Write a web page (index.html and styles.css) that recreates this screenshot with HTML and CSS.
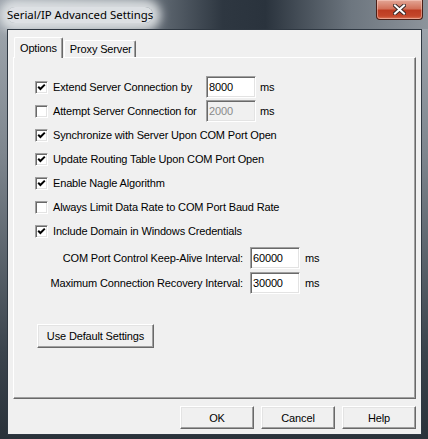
FILE: index.html
```html
<!DOCTYPE html>
<html lang="en">
<head>
    <meta charset="UTF-8">
    <meta name="viewport" content="width=device-width, initial-scale=1.0">
    <title>Serial/IP Advanced Settings</title>
    <link rel="stylesheet" href="styles.css">
</head>
<body>
    <div class="window">
        <div class="titlebar">
            <span class="title">Serial/IP Advanced Settings</span>
            <button class="close-btn" title="Close">
                <svg width="13" height="11" viewBox="0 0 13 11">
                    <path d="M2 1.5 L11 9.5 M11 1.5 L2 9.5" stroke="#3b2a28" stroke-width="4" stroke-linecap="square"/>
                    <path d="M2 1.5 L11 9.5 M11 1.5 L2 9.5" stroke="#ffffff" stroke-width="2" stroke-linecap="square"/>
                </svg>
            </button>
        </div>

        <div class="client">
            <div class="tabs">
                <div class="tab active">Options</div>
                <div class="tab">Proxy Server</div>
            </div>

            <div class="tab-panel">
                <div class="option">
                    <span class="box checked"><svg width="9" height="9" viewBox="0 0 9 9"><polyline points="1.2,3.8 3.4,6 7.8,1.6" fill="none" stroke="#000" stroke-width="2"/></svg></span>
                    <span class="option-label fixed">Extend Server Connection by</span>
                    <input class="field" type="text" value="8000">
                    <span class="unit">ms</span>
                </div>
                <div class="option">
                    <span class="box"></span>
                    <span class="option-label fixed">Attempt Server Connection for</span>
                    <input class="field" type="text" value="2000" disabled>
                    <span class="unit">ms</span>
                </div>
                <div class="option">
                    <span class="box checked"><svg width="9" height="9" viewBox="0 0 9 9"><polyline points="1.2,3.8 3.4,6 7.8,1.6" fill="none" stroke="#000" stroke-width="2"/></svg></span>
                    <span class="option-label">Synchronize with Server Upon COM Port Open</span>
                </div>
                <div class="option">
                    <span class="box checked"><svg width="9" height="9" viewBox="0 0 9 9"><polyline points="1.2,3.8 3.4,6 7.8,1.6" fill="none" stroke="#000" stroke-width="2"/></svg></span>
                    <span class="option-label">Update Routing Table Upon COM Port Open</span>
                </div>
                <div class="option">
                    <span class="box checked"><svg width="9" height="9" viewBox="0 0 9 9"><polyline points="1.2,3.8 3.4,6 7.8,1.6" fill="none" stroke="#000" stroke-width="2"/></svg></span>
                    <span class="option-label">Enable Nagle Algorithm</span>
                </div>
                <div class="option">
                    <span class="box"></span>
                    <span class="option-label">Always Limit Data Rate to COM Port Baud Rate</span>
                </div>
                <div class="option">
                    <span class="box checked"><svg width="9" height="9" viewBox="0 0 9 9"><polyline points="1.2,3.8 3.4,6 7.8,1.6" fill="none" stroke="#000" stroke-width="2"/></svg></span>
                    <span class="option-label">Include Domain in Windows Credentials</span>
                </div>

                <div class="intervals">
                    <label class="interval-label">COM Port Control Keep-Alive Interval:</label>
                    <input class="field" type="text" value="60000">
                    <span class="unit">ms</span>

                    <label class="interval-label">Maximum Connection Recovery Interval:</label>
                    <input class="field" type="text" value="30000">
                    <span class="unit">ms</span>
                </div>

                <button class="btn defaults-btn">Use Default Settings</button>
            </div>

            <div class="actions">
                <button class="btn">OK</button>
                <button class="btn">Cancel</button>
                <button class="btn">Help</button>
            </div>
        </div>
    </div>
</body>
</html>
```

FILE: styles.css
```css
* {
    margin: 0;
    padding: 0;
    box-sizing: border-box;
}

body {
    font-family: 'Liberation Sans', Arial, sans-serif;
    font-size: 11px;
    letter-spacing: -0.15px;
    color: #000;
    background-color: #2a323a;
    white-space: nowrap;
}

/* Window frame */
.window {
    width: 428px;
    height: 439px;
    padding: 0 6px 4px 7px;
    background: linear-gradient(to bottom, #a3aab1 0%, #7e868e 35%, #3b444d 80%, #2a323a 100%);
    display: flex;
    flex-direction: column;
}

.titlebar {
    height: 29px;
    margin: 0 -6px 0 -7px;
    padding: 0 5px 0 7px;
    display: flex;
    justify-content: space-between;
    align-items: flex-start;
    background: linear-gradient(to right, #9aa2aa 0%, #78818a 30%, #2e3741 52%, #2a333d 62%, #6d767f 82%, #8d949b 100%);
}

.title {
    margin-top: 7px;
    font-family: 'Noto Sans', sans-serif;
    font-size: 11.4px;
    letter-spacing: 0;
    line-height: 16px;
    color: #000;
    background-color: rgba(226, 229, 232, 0.95);
    border-radius: 8px;
    box-shadow: 0 0 10px 8px rgba(226, 229, 232, 0.9);
}

.close-btn {
    width: 47px;
    height: 20px;
    border: 1px solid #4a1f17;
    border-top: none;
    border-radius: 0 0 4px 4px;
    background: linear-gradient(to bottom, #e3a696 0%, #d2725b 45%, #bd3c22 55%, #c4472b 85%, #dd7a5c 100%);
    box-shadow: inset 0 0 0 1px rgba(255, 220, 210, 0.45);
    display: flex;
    align-items: center;
    justify-content: center;
}

/* Dialog body */
.client {
    height: 406px;
    background-color: #f0f0f0;
    border: 1px solid #2f3842;
    padding: 7px 5px 0 5px;
    display: flex;
    flex-direction: column;
}

.tabs {
    display: flex;
    align-items: flex-end;
    height: 20px;
    padding-left: 1px;
    position: relative;
    z-index: 1;
}

.tab {
    height: 17px;
    padding: 0 3px 0 5px;
    line-height: 16px;
    background-color: #f0f0f0;
    border-top: 1px solid #fff;
    border-left: 1px solid #fff;
    border-right: 1px solid #696969;
    box-shadow: inset -1px 0 0 #a0a0a0;
    border-radius: 2px 2px 0 0;
}

.tab.active {
    height: 21px;
    margin-bottom: -1px;
    padding: 2px 5px 0 5px;
    margin-right: 1px;
}

.tab-panel {
    height: 342px;
    border: 1px solid;
    border-color: #fff #696969 #696969 #fff;
    box-shadow: inset -1px -1px 0 #a0a0a0;
    padding: 17px 0 0 21px;
}

.option {
    height: 24px;
    display: flex;
    align-items: center;
}

.box {
    width: 13px;
    height: 13px;
    flex-shrink: 0;
    background-color: #fff;
    border: 1px solid;
    border-color: #a0a0a0 #fff #fff #a0a0a0;
    box-shadow: inset 1px 1px 0 #696969, inset -1px -1px 0 #e3e3e3;
    padding: 1px 0 0 1px;
    margin-right: 5px;
}

.box svg {
    display: block;
}

.option-label.fixed {
    width: 153px;
}

.field {
    width: 50px;
    height: 22px;
    font-family: inherit;
    font-size: 11px;
    letter-spacing: -0.15px;
    color: #000;
    padding: 0 2px;
    background-color: #fff;
    border: 1px solid;
    border-color: #a0a0a0 #fff #fff #a0a0a0;
    box-shadow: inset 1px 1px 0 #696969, inset -1px -1px 0 #e3e3e3;
    outline: none;
}

.field:disabled {
    background-color: #f0f0f0;
    color: #8a8a8a;
}

.unit {
    margin-left: 4px;
}

.intervals {
    margin-top: 2px;
    display: grid;
    grid-template-columns: 208px 50px auto;
    grid-auto-rows: 25px;
    column-gap: 7px;
    align-items: center;
}

.intervals .unit {
    margin-left: -2px;
}

.interval-label {
    text-align: right;
}

.btn {
    height: 23px;
    font-family: inherit;
    font-size: 11px;
    letter-spacing: -0.15px;
    color: #000;
    background-color: #f0f0f0;
    border: 1px solid;
    border-color: #fff #696969 #696969 #fff;
    box-shadow: inset -1px -1px 0 #a0a0a0, inset 1px 1px 0 #e3e3e3;
    cursor: pointer;
}

.defaults-btn {
    width: 117px;
    height: 24px;
    margin: 29px 0 0 2px;
}

.actions {
    margin-top: 7px;
    display: flex;
    justify-content: flex-end;
    gap: 7px;
}

.actions .btn {
    width: 74px;
}
```
